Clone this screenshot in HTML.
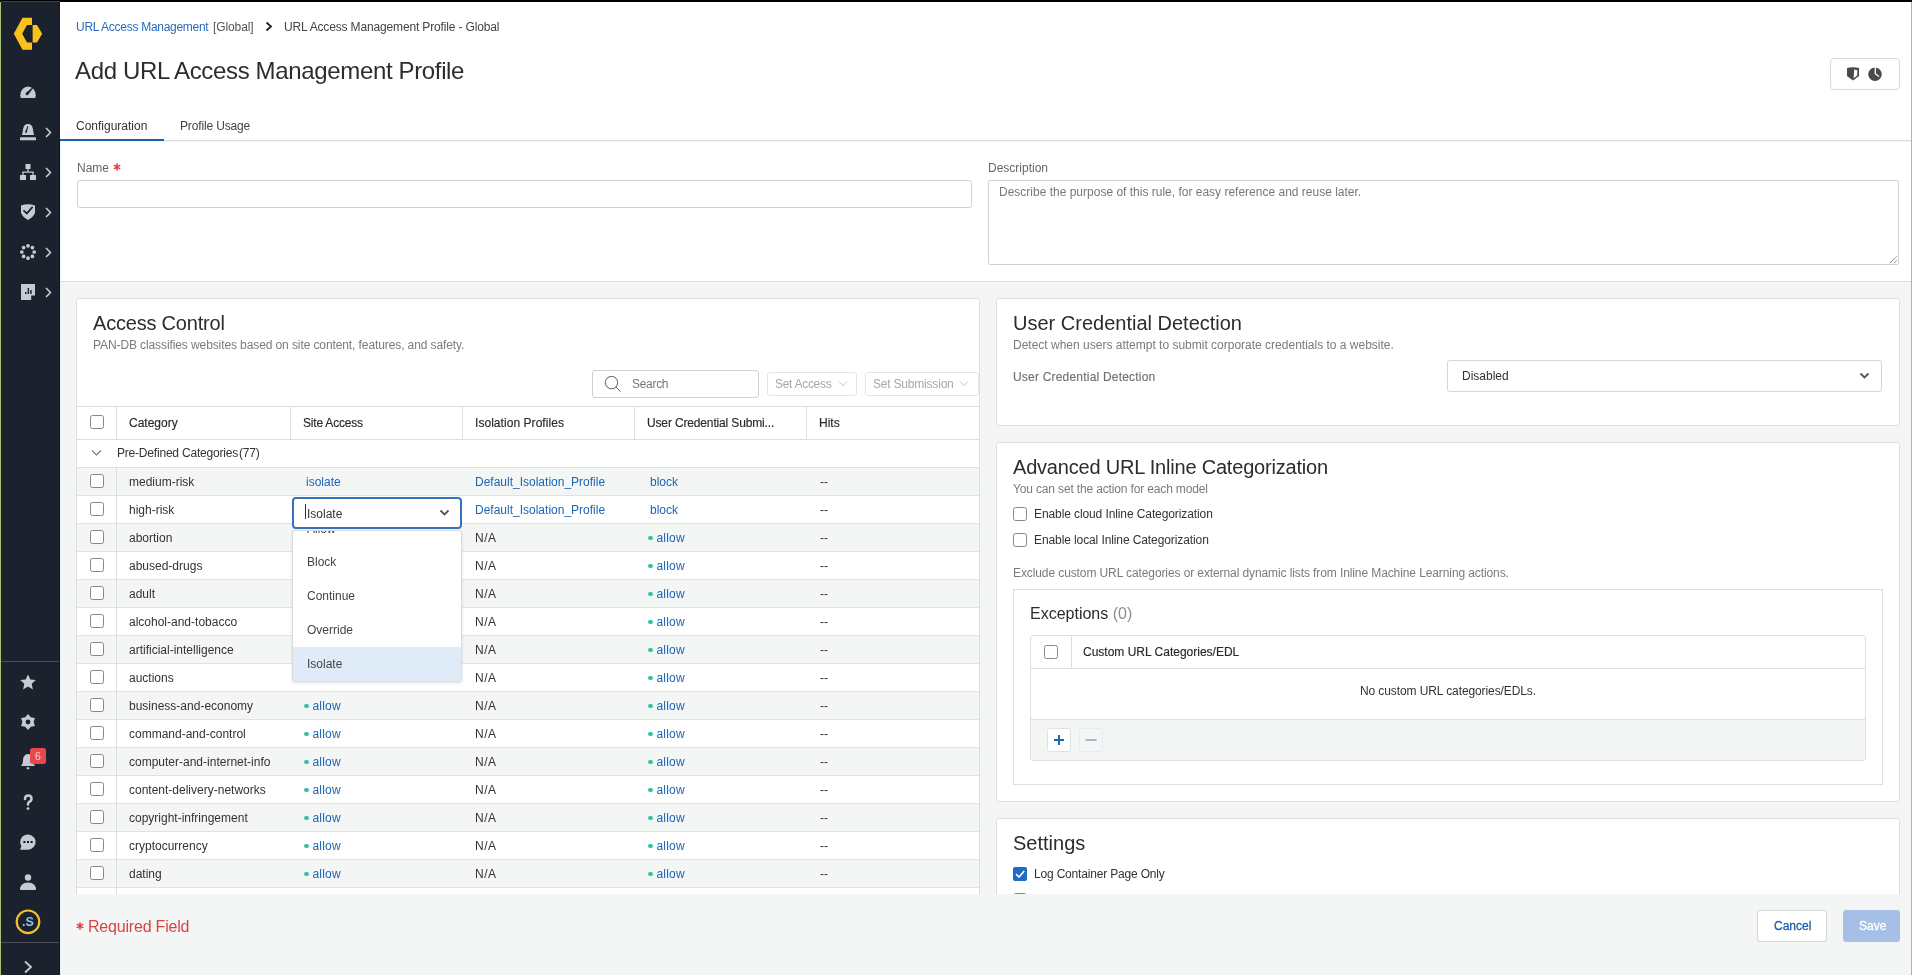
<!DOCTYPE html>
<html><head><meta charset="utf-8"><style>
*{box-sizing:border-box;margin:0;padding:0}
html,body{width:1912px;height:975px;overflow:hidden;background:#fff;font-family:"Liberation Sans",sans-serif;color:#333;font-size:12px}
.a{position:absolute;white-space:nowrap}
.t{position:absolute;white-space:nowrap;line-height:14px}
.graybg{background:#f4f5f5}
.panel{position:absolute;background:#fff;border:1px solid #dcdedf;border-radius:3px}
.cb{position:absolute;width:14px;height:14px;border:1px solid #85898e;border-radius:2.5px;background:#fff}
.lnk{color:#1b65b5}
.hd{color:#262a2e;-webkit-text-stroke:0.15px #262a2e}
.row{position:absolute;left:0;width:903px;height:28px;border-bottom:1px solid #dfe1e3}
.dot{display:inline-block;width:4.5px;height:4.5px;border-radius:50%;background:#3dbdad;margin-right:4px;vertical-align:2px}
.ptitle{font-size:20px;color:#2a2d30;line-height:22px}
.psub{font-size:12px;color:#777b80;line-height:14px}
</style></head><body>
<div id="root" style="position:absolute;left:0;top:0;width:1912px;height:975px;will-change:transform">
<div class="a graybg" style="left:60px;top:282px;width:1852px;height:693px"></div>
<div class="t lnk" style="left:76px;top:20px;letter-spacing:-0.28px;color:#2a6cb8">URL Access Management</div>
<div class="t" style="left:213px;top:20px;color:#555;letter-spacing:-0.1px">[Global]</div>
<svg class="a" style="left:265px;top:21px" width="8" height="11" viewBox="0 0 8 11"><path d="M1.5 1.5 L6 5.5 L1.5 9.5" fill="none" stroke="#222" stroke-width="1.8"/></svg>
<div class="t" style="left:284px;top:20px;color:#444;letter-spacing:-0.15px">URL Access Management Profile - Global</div>
<div class="a" style="left:75px;top:57px;font-size:24px;line-height:28px;color:#2b2e31;letter-spacing:-0.35px">Add URL Access Management Profile</div>
<div class="a" style="left:1830px;top:58px;width:70px;height:32px;border:1px solid #d5d8db;border-radius:4px"></div>
<svg class="a" style="left:1840px;top:62px" width="50" height="24" viewBox="1840 62 50 24"><path d="M1847 68 Q1853 66.3 1859 68 L1859 76 L1853 80.4 L1847 76 Z" fill="#4a4a4a"/><path d="M1854.2 69.6 L1857.4 70.2 L1857.2 75.4 L1853.6 78.3 Z" fill="#fff"/><circle cx="1875" cy="74.2" r="6.7" fill="#4a4a4a"/><path d="M1875.3 66.5 L1875.3 73.8 L1879 76.6" fill="none" stroke="#fff" stroke-width="1.3"/></svg>
<div class="t" style="left:76px;top:119px;color:#333">Configuration</div>
<div class="t" style="left:180px;top:119px;color:#444;letter-spacing:-0.15px">Profile Usage</div>
<div class="a" style="left:60px;top:140px;width:1852px;height:1px;background:#dadbdc"></div><div class="a" style="left:60px;top:141px;width:1852px;height:1px;background:#f3f4f4"></div>
<div class="a" style="left:60px;top:139px;width:104px;height:2px;background:#1f5fa8"></div>
<div class="t" style="left:77px;top:161px;color:#666">Name</div><svg width="8" height="8" viewBox="0 0 8 8" style="position:absolute;left:113px;top:163px"><path d="M4 0.3 V7.7 M0.8 2.2 L7.2 5.8 M0.8 5.8 L7.2 2.2" stroke="#d94545" stroke-width="1.5"/></svg>
<div class="a" style="left:77px;top:180px;width:895px;height:28px;border:1px solid #cfd2d5;border-radius:3px"></div>
<div class="t" style="left:988px;top:161px;color:#666">Description</div>
<div class="a" style="left:988px;top:180px;width:911px;height:85px;border:1px solid #cfd2d5;border-radius:2px"></div>
<div class="t" style="left:999px;top:185px;color:#777">Describe the purpose of this rule, for easy reference and reuse later.</div>
<div class="a" style="left:60px;top:281px;width:1852px;height:1px;background:#dcdedf"></div>
<svg class="a" style="left:1888px;top:254px" width="10" height="10" viewBox="1888 254 10 10"><path d="M1890 263 L1897 256 M1894.3 263 L1897 260.3" stroke="#555" stroke-width="1" stroke-dasharray="1 0.6"/></svg>
<div class="a" style="left:0;top:0;width:1912px;height:894px;overflow:hidden">
<div class="panel" style="left:76px;top:298px;width:904px;height:700px"></div>
<div class="t ptitle" style="left:93px;top:312px;letter-spacing:-0.2px">Access Control</div>
<div class="t psub" style="left:93px;top:338px;letter-spacing:-0.1px">PAN-DB classifies websites based on site content, features, and safety.</div>
<div class="a" style="left:592px;top:370px;width:167px;height:28px;border:1px solid #cfd2d5;border-radius:3px;background:#fff"></div>
<svg class="a" style="left:604px;top:375px" width="18" height="18" viewBox="0 0 18 18"><circle cx="7.5" cy="7.6" r="6.2" fill="none" stroke="#5a5e62" stroke-width="1"/><line x1="11.9" y1="12" x2="16.5" y2="16.6" stroke="#5a5e62" stroke-width="1"/></svg>
<div class="t" style="left:632px;top:377px;color:#72777c;letter-spacing:-0.3px">Search</div>
<div class="a" style="left:767px;top:372px;width:90px;height:24px;border:1px solid #e3e5e7;border-radius:3px;background:#fff"></div>
<div class="t" style="left:775px;top:377px;color:#a4a8ac;letter-spacing:-0.3px">Set Access</div>
<svg class="a" style="left:838px;top:380px" width="10" height="7" viewBox="0 0 10 7"><path d="M1 1.5 L5 5.5 L9 1.5" fill="none" stroke="#c3c6c9" stroke-width="1"/></svg>
<div class="a" style="left:865px;top:372px;width:114px;height:24px;border:1px solid #e3e5e7;border-radius:3px;background:#fff"></div>
<div class="t" style="left:873px;top:377px;color:#a4a8ac;letter-spacing:-0.2px">Set Submission</div>
<svg class="a" style="left:959px;top:380px" width="10" height="7" viewBox="0 0 10 7"><path d="M1 1.5 L5 5.5 L9 1.5" fill="none" stroke="#c3c6c9" stroke-width="1"/></svg>
<div class="a" style="left:77px;top:406px;width:902px;height:1px;background:#dcdee0"></div>
<div class="a" style="left:77px;top:439px;width:902px;height:1px;background:#dcdee0"></div>
<div class="a" style="left:116px;top:407px;width:1px;height:32px;background:#dcdee0"></div>
<div class="a" style="left:290px;top:407px;width:1px;height:32px;background:#dcdee0"></div>
<div class="a" style="left:462px;top:407px;width:1px;height:32px;background:#dcdee0"></div>
<div class="a" style="left:634px;top:407px;width:1px;height:32px;background:#dcdee0"></div>
<div class="a" style="left:806px;top:407px;width:1px;height:32px;background:#dcdee0"></div>
<div class="cb" style="left:90px;top:415px"></div>
<div class="t hd" style="left:129px;top:416px;letter-spacing:0px">Category</div>
<div class="t hd" style="left:303px;top:416px;letter-spacing:-0.2px">Site Access</div>
<div class="t hd" style="left:475px;top:416px;letter-spacing:0.05px">Isolation Profiles</div>
<div class="t hd" style="left:647px;top:416px;letter-spacing:-0.15px">User Credential Submi...</div>
<div class="t hd" style="left:819px;top:416px;letter-spacing:0px">Hits</div>
<div class="a" style="left:77px;top:467px;width:902px;height:1px;background:#dcdee0"></div>
<svg class="a" style="left:91px;top:449px" width="11" height="8" viewBox="0 0 11 8"><path d="M1 1.5 L5.5 6 L10 1.5" fill="none" stroke="#777" stroke-width="1.1"/></svg>
<div class="t" style="left:117px;top:446px;color:#333;letter-spacing:-0.2px">Pre-Defined Categories<span style="margin-left:1px">(77)</span></div>
<div class="a" style="left:77px;top:468px;width:902px;height:28px;background:#f4f5f5;border-bottom:1px solid #e0e2e4"></div>
<div class="a" style="left:116px;top:467px;width:1px;height:28px;background:#dcdee0"></div>
<div class="cb" style="left:90px;top:474px"></div>
<div class="t" style="left:129px;top:475px;color:#333">medium-risk</div>
<div class="t" style="left:306px;top:475px"><span class="lnk">isolate</span></div>
<div class="t" style="left:475px;top:475px;color:#333"><span class="lnk">Default_Isolation_Profile</span></div>
<div class="t" style="left:650px;top:475px"><span class="lnk">block</span></div>
<div class="t" style="left:820px;top:475px;color:#333">--</div>
<div class="a" style="left:77px;top:496px;width:902px;height:28px;background:#fff;border-bottom:1px solid #e0e2e4"></div>
<div class="a" style="left:116px;top:495px;width:1px;height:28px;background:#dcdee0"></div>
<div class="cb" style="left:90px;top:502px"></div>
<div class="t" style="left:129px;top:503px;color:#333">high-risk</div>
<div class="t" style="left:475px;top:503px;color:#333"><span class="lnk">Default_Isolation_Profile</span></div>
<div class="t" style="left:650px;top:503px"><span class="lnk">block</span></div>
<div class="t" style="left:820px;top:503px;color:#333">--</div>
<div class="a" style="left:77px;top:524px;width:902px;height:28px;background:#f4f5f5;border-bottom:1px solid #e0e2e4"></div>
<div class="a" style="left:116px;top:523px;width:1px;height:28px;background:#dcdee0"></div>
<div class="cb" style="left:90px;top:530px"></div>
<div class="t" style="left:129px;top:531px;color:#333">abortion</div>
<div class="t" style="left:475px;top:531px;color:#333"><span style="letter-spacing:0.5px">N/A</span></div>
<div class="t" style="left:648px;top:531px"><span class="dot"></span><span class="lnk" style="letter-spacing:0.2px">allow</span></div>
<div class="t" style="left:820px;top:531px;color:#333">--</div>
<div class="a" style="left:77px;top:552px;width:902px;height:28px;background:#fff;border-bottom:1px solid #e0e2e4"></div>
<div class="a" style="left:116px;top:551px;width:1px;height:28px;background:#dcdee0"></div>
<div class="cb" style="left:90px;top:558px"></div>
<div class="t" style="left:129px;top:559px;color:#333">abused-drugs</div>
<div class="t" style="left:475px;top:559px;color:#333"><span style="letter-spacing:0.5px">N/A</span></div>
<div class="t" style="left:648px;top:559px"><span class="dot"></span><span class="lnk" style="letter-spacing:0.2px">allow</span></div>
<div class="t" style="left:820px;top:559px;color:#333">--</div>
<div class="a" style="left:77px;top:580px;width:902px;height:28px;background:#f4f5f5;border-bottom:1px solid #e0e2e4"></div>
<div class="a" style="left:116px;top:579px;width:1px;height:28px;background:#dcdee0"></div>
<div class="cb" style="left:90px;top:586px"></div>
<div class="t" style="left:129px;top:587px;color:#333">adult</div>
<div class="t" style="left:475px;top:587px;color:#333"><span style="letter-spacing:0.5px">N/A</span></div>
<div class="t" style="left:648px;top:587px"><span class="dot"></span><span class="lnk" style="letter-spacing:0.2px">allow</span></div>
<div class="t" style="left:820px;top:587px;color:#333">--</div>
<div class="a" style="left:77px;top:608px;width:902px;height:28px;background:#fff;border-bottom:1px solid #e0e2e4"></div>
<div class="a" style="left:116px;top:607px;width:1px;height:28px;background:#dcdee0"></div>
<div class="cb" style="left:90px;top:614px"></div>
<div class="t" style="left:129px;top:615px;color:#333">alcohol-and-tobacco</div>
<div class="t" style="left:475px;top:615px;color:#333"><span style="letter-spacing:0.5px">N/A</span></div>
<div class="t" style="left:648px;top:615px"><span class="dot"></span><span class="lnk" style="letter-spacing:0.2px">allow</span></div>
<div class="t" style="left:820px;top:615px;color:#333">--</div>
<div class="a" style="left:77px;top:636px;width:902px;height:28px;background:#f4f5f5;border-bottom:1px solid #e0e2e4"></div>
<div class="a" style="left:116px;top:635px;width:1px;height:28px;background:#dcdee0"></div>
<div class="cb" style="left:90px;top:642px"></div>
<div class="t" style="left:129px;top:643px;color:#333">artificial-intelligence</div>
<div class="t" style="left:475px;top:643px;color:#333"><span style="letter-spacing:0.5px">N/A</span></div>
<div class="t" style="left:648px;top:643px"><span class="dot"></span><span class="lnk" style="letter-spacing:0.2px">allow</span></div>
<div class="t" style="left:820px;top:643px;color:#333">--</div>
<div class="a" style="left:77px;top:664px;width:902px;height:28px;background:#fff;border-bottom:1px solid #e0e2e4"></div>
<div class="a" style="left:116px;top:663px;width:1px;height:28px;background:#dcdee0"></div>
<div class="cb" style="left:90px;top:670px"></div>
<div class="t" style="left:129px;top:671px;color:#333">auctions</div>
<div class="t" style="left:475px;top:671px;color:#333"><span style="letter-spacing:0.5px">N/A</span></div>
<div class="t" style="left:648px;top:671px"><span class="dot"></span><span class="lnk" style="letter-spacing:0.2px">allow</span></div>
<div class="t" style="left:820px;top:671px;color:#333">--</div>
<div class="a" style="left:77px;top:692px;width:902px;height:28px;background:#f4f5f5;border-bottom:1px solid #e0e2e4"></div>
<div class="a" style="left:116px;top:691px;width:1px;height:28px;background:#dcdee0"></div>
<div class="cb" style="left:90px;top:698px"></div>
<div class="t" style="left:129px;top:699px;color:#333">business-and-economy</div>
<div class="t" style="left:304px;top:699px"><span class="dot"></span><span class="lnk" style="letter-spacing:0.2px">allow</span></div>
<div class="t" style="left:475px;top:699px;color:#333"><span style="letter-spacing:0.5px">N/A</span></div>
<div class="t" style="left:648px;top:699px"><span class="dot"></span><span class="lnk" style="letter-spacing:0.2px">allow</span></div>
<div class="t" style="left:820px;top:699px;color:#333">--</div>
<div class="a" style="left:77px;top:720px;width:902px;height:28px;background:#fff;border-bottom:1px solid #e0e2e4"></div>
<div class="a" style="left:116px;top:719px;width:1px;height:28px;background:#dcdee0"></div>
<div class="cb" style="left:90px;top:726px"></div>
<div class="t" style="left:129px;top:727px;color:#333">command-and-control</div>
<div class="t" style="left:304px;top:727px"><span class="dot"></span><span class="lnk" style="letter-spacing:0.2px">allow</span></div>
<div class="t" style="left:475px;top:727px;color:#333"><span style="letter-spacing:0.5px">N/A</span></div>
<div class="t" style="left:648px;top:727px"><span class="dot"></span><span class="lnk" style="letter-spacing:0.2px">allow</span></div>
<div class="t" style="left:820px;top:727px;color:#333">--</div>
<div class="a" style="left:77px;top:748px;width:902px;height:28px;background:#f4f5f5;border-bottom:1px solid #e0e2e4"></div>
<div class="a" style="left:116px;top:747px;width:1px;height:28px;background:#dcdee0"></div>
<div class="cb" style="left:90px;top:754px"></div>
<div class="t" style="left:129px;top:755px;color:#333">computer-and-internet-info</div>
<div class="t" style="left:304px;top:755px"><span class="dot"></span><span class="lnk" style="letter-spacing:0.2px">allow</span></div>
<div class="t" style="left:475px;top:755px;color:#333"><span style="letter-spacing:0.5px">N/A</span></div>
<div class="t" style="left:648px;top:755px"><span class="dot"></span><span class="lnk" style="letter-spacing:0.2px">allow</span></div>
<div class="t" style="left:820px;top:755px;color:#333">--</div>
<div class="a" style="left:77px;top:776px;width:902px;height:28px;background:#fff;border-bottom:1px solid #e0e2e4"></div>
<div class="a" style="left:116px;top:775px;width:1px;height:28px;background:#dcdee0"></div>
<div class="cb" style="left:90px;top:782px"></div>
<div class="t" style="left:129px;top:783px;color:#333">content-delivery-networks</div>
<div class="t" style="left:304px;top:783px"><span class="dot"></span><span class="lnk" style="letter-spacing:0.2px">allow</span></div>
<div class="t" style="left:475px;top:783px;color:#333"><span style="letter-spacing:0.5px">N/A</span></div>
<div class="t" style="left:648px;top:783px"><span class="dot"></span><span class="lnk" style="letter-spacing:0.2px">allow</span></div>
<div class="t" style="left:820px;top:783px;color:#333">--</div>
<div class="a" style="left:77px;top:804px;width:902px;height:28px;background:#f4f5f5;border-bottom:1px solid #e0e2e4"></div>
<div class="a" style="left:116px;top:803px;width:1px;height:28px;background:#dcdee0"></div>
<div class="cb" style="left:90px;top:810px"></div>
<div class="t" style="left:129px;top:811px;color:#333">copyright-infringement</div>
<div class="t" style="left:304px;top:811px"><span class="dot"></span><span class="lnk" style="letter-spacing:0.2px">allow</span></div>
<div class="t" style="left:475px;top:811px;color:#333"><span style="letter-spacing:0.5px">N/A</span></div>
<div class="t" style="left:648px;top:811px"><span class="dot"></span><span class="lnk" style="letter-spacing:0.2px">allow</span></div>
<div class="t" style="left:820px;top:811px;color:#333">--</div>
<div class="a" style="left:77px;top:832px;width:902px;height:28px;background:#fff;border-bottom:1px solid #e0e2e4"></div>
<div class="a" style="left:116px;top:831px;width:1px;height:28px;background:#dcdee0"></div>
<div class="cb" style="left:90px;top:838px"></div>
<div class="t" style="left:129px;top:839px;color:#333">cryptocurrency</div>
<div class="t" style="left:304px;top:839px"><span class="dot"></span><span class="lnk" style="letter-spacing:0.2px">allow</span></div>
<div class="t" style="left:475px;top:839px;color:#333"><span style="letter-spacing:0.5px">N/A</span></div>
<div class="t" style="left:648px;top:839px"><span class="dot"></span><span class="lnk" style="letter-spacing:0.2px">allow</span></div>
<div class="t" style="left:820px;top:839px;color:#333">--</div>
<div class="a" style="left:77px;top:860px;width:902px;height:28px;background:#f4f5f5;border-bottom:1px solid #e0e2e4"></div>
<div class="a" style="left:116px;top:859px;width:1px;height:28px;background:#dcdee0"></div>
<div class="cb" style="left:90px;top:866px"></div>
<div class="t" style="left:129px;top:867px;color:#333">dating</div>
<div class="t" style="left:304px;top:867px"><span class="dot"></span><span class="lnk" style="letter-spacing:0.2px">allow</span></div>
<div class="t" style="left:475px;top:867px;color:#333"><span style="letter-spacing:0.5px">N/A</span></div>
<div class="t" style="left:648px;top:867px"><span class="dot"></span><span class="lnk" style="letter-spacing:0.2px">allow</span></div>
<div class="t" style="left:820px;top:867px;color:#333">--</div>
<div class="a" style="left:77px;top:888px;width:902px;height:28px;background:#fff;border-bottom:1px solid #e0e2e4"></div>
<div class="a" style="left:116px;top:887px;width:1px;height:28px;background:#dcdee0"></div>
<div class="cb" style="left:90px;top:894px"></div>
<div class="t" style="left:129px;top:895px;color:#333">data-theft</div>
<div class="t" style="left:304px;top:895px"><span class="dot"></span><span class="lnk" style="letter-spacing:0.2px">allow</span></div>
<div class="t" style="left:475px;top:895px;color:#333"><span style="letter-spacing:0.5px">N/A</span></div>
<div class="t" style="left:648px;top:895px"><span class="dot"></span><span class="lnk" style="letter-spacing:0.2px">allow</span></div>
<div class="t" style="left:820px;top:895px;color:#333">--</div>
<div class="a" style="left:292px;top:497px;width:170px;height:32px;border:2px solid #3574bc;border-radius:4px;background:#fff"></div>
<div class="a" style="left:305px;top:504px;width:1px;height:15px;background:#333"></div>
<div class="t" style="left:307px;top:507px;color:#333">Isolate</div>
<svg class="a" style="left:439px;top:509px" width="11" height="8" viewBox="0 0 11 8"><path d="M1.5 1.5 L5.5 5.5 L9.5 1.5" fill="none" stroke="#555" stroke-width="1.8"/></svg>
<div class="a" style="left:292px;top:530px;width:170px;height:152px;border:1px solid #dadcde;border-radius:3px;background:#fff;box-shadow:0 1px 3px rgba(0,0,0,0.12);overflow:hidden">
<div class="a" style="left:0;top:-20px;width:168px;height:34px;"></div>
<div class="t" style="left:14px;top:-9px;color:#444">Allow</div>
<div class="a" style="left:0;top:14px;width:168px;height:34px;"></div>
<div class="t" style="left:14px;top:24px;color:#444">Block</div>
<div class="a" style="left:0;top:48px;width:168px;height:34px;"></div>
<div class="t" style="left:14px;top:58px;color:#444">Continue</div>
<div class="a" style="left:0;top:82px;width:168px;height:34px;"></div>
<div class="t" style="left:14px;top:92px;color:#444">Override</div>
<div class="a" style="left:0;top:116px;width:168px;height:34px;background:#dfebf7;"></div>
<div class="t" style="left:14px;top:126px;color:#444">Isolate</div>
</div>
<div class="panel" style="left:996px;top:298px;width:904px;height:128px"></div>
<div class="t ptitle" style="left:1013px;top:312px">User Credential Detection</div>
<div class="t psub" style="left:1013px;top:338px">Detect when users attempt to submit corporate credentials to a website.</div>
<div class="t" style="left:1013px;top:370px;color:#6d7176;letter-spacing:0.2px;-webkit-text-stroke:0.15px #6d7176">User Credential Detection</div>
<div class="a" style="left:1447px;top:360px;width:435px;height:32px;border:1px solid #d3d6d9;border-radius:3px;background:#fff"></div>
<div class="t" style="left:1462px;top:369px;color:#333">Disabled</div>
<svg class="a" style="left:1859px;top:372px" width="11" height="8" viewBox="0 0 11 8"><path d="M1.5 1.5 L5.5 5.5 L9.5 1.5" fill="none" stroke="#555" stroke-width="1.8"/></svg>
<div class="panel" style="left:996px;top:442px;width:904px;height:360px"></div>
<div class="t ptitle" style="left:1013px;top:456px;letter-spacing:-0.2px">Advanced URL Inline Categorization</div>
<div class="t psub" style="left:1013px;top:482px;letter-spacing:-0.15px">You can set the action for each model</div>
<div class="cb" style="left:1013px;top:507px"></div>
<div class="t" style="left:1034px;top:507px;color:#333;letter-spacing:-0.1px">Enable cloud Inline Categorization</div>
<div class="cb" style="left:1013px;top:533px"></div>
<div class="t" style="left:1034px;top:533px;color:#333;letter-spacing:-0.1px">Enable local Inline Categorization</div>
<div class="t psub" style="left:1013px;top:566px;letter-spacing:-0.1px">Exclude custom URL categories or external dynamic lists from Inline Machine Learning actions.</div>
<div class="a" style="left:1013px;top:589px;width:870px;height:196px;border:1px solid #dcdedf;background:#fff"></div>
<div class="t" style="left:1030px;top:605px;font-size:16px;line-height:18px;color:#2a2d30">Exceptions <span style="color:#8a8e92">(0)</span></div>
<div class="a" style="left:1030px;top:635px;width:836px;height:126px;border:1px solid #dcdee0;border-radius:3px;background:#fff;overflow:hidden">
<div class="a" style="left:0;top:32px;width:836px;height:1px;background:#dcdee0"></div>
<div class="a" style="left:40px;top:0;width:1px;height:32px;background:#dcdee0"></div>
<div class="cb" style="left:13px;top:9px"></div>
<div class="t hd" style="left:52px;top:9px">Custom URL Categories/EDL</div>
<div class="t" style="left:329px;top:48px;color:#333;letter-spacing:-0.1px">No custom URL categories/EDLs.</div>
<div class="a graybg" style="left:0;top:83px;width:836px;height:43px;border-top:1px solid #dcdee0"></div>
</div>
<div class="a" style="left:1047px;top:728px;width:24px;height:24px;border:1px solid #dfe1e3;border-radius:3px;background:#fff"></div>
<svg class="a" style="left:1052px;top:733px" width="14" height="14" viewBox="0 0 14 14"><path d="M7 2 V12 M2 7 H12" stroke="#1f66b8" stroke-width="2"/></svg>
<div class="a" style="left:1079px;top:728px;width:24px;height:24px;border:1px solid #e8eaec;border-radius:3px;background:#f4f5f5"></div>
<svg class="a" style="left:1084px;top:733px" width="14" height="14" viewBox="0 0 14 14"><path d="M1.5 7 H12.5" stroke="#a8b6cc" stroke-width="2"/></svg>
<div class="panel" style="left:996px;top:818px;width:904px;height:200px"></div>
<div class="t ptitle" style="left:1013px;top:832px">Settings</div>
<div class="a" style="left:1013px;top:867px;width:14px;height:14px;border-radius:2px;background:#1f6bc6"></div>
<svg class="a" style="left:1013px;top:867px" width="14" height="14" viewBox="0 0 14 14"><path d="M3 7.2 L6 10 L11.2 4" fill="none" stroke="#fff" stroke-width="1.6"/></svg>
<div class="t" style="left:1034px;top:867px;color:#333;letter-spacing:-0.18px">Log Container Page Only</div>
<div class="cb" style="left:1013px;top:893px"></div>
</div>
<div class="a graybg" style="left:60px;top:894px;width:1852px;height:81px"></div>
<svg width="8" height="8" viewBox="0 0 8 8" style="position:absolute;left:76px;top:922px"><path d="M4 0.3 V7.7 M0.8 2.2 L7.2 5.8 M0.8 5.8 L7.2 2.2" stroke="#d94545" stroke-width="1.5"/></svg><div class="t" style="left:88px;top:918px;font-size:16px;line-height:18px;color:#d64545;letter-spacing:-0.2px">Required Field</div>
<div class="a" style="left:1757px;top:910px;width:70px;height:32px;border:1px solid #d3d6d9;border-radius:3px;background:#fff"></div>
<div class="t" style="left:1774px;top:919px;color:#1f5fa8;-webkit-text-stroke:0.3px #1f5fa8">Cancel</div>
<div class="a" style="left:1843px;top:910px;width:57px;height:32px;border-radius:3px;background:#a6bfe6"></div>
<div class="t" style="left:1859px;top:919px;color:#fff;-webkit-text-stroke:0.3px #fff">Save</div>
<div class="a" style="left:60px;top:141px;width:1px;height:834px;background:#eceff5"></div>
<div class="a" style="left:0;top:0;width:60px;height:975px;background:#1c222d"></div>
<div class="a" style="left:59px;top:0;width:1px;height:975px;background:#14171e"></div>
<div class="a" style="left:1px;top:661px;width:58px;height:1px;background:#4a4e57"></div>
<div class="a" style="left:1px;top:942px;width:58px;height:1px;background:#4a4e57"></div>
<svg class="a" style="left:0;top:0" width="60" height="975" viewBox="0 0 60 975">
<g fill="#f8c21c">
<path d="M32 17.8 L22.5 17.8 L13.8 33.8 L22.5 49.8 L32 49.8 L32 42.6 L27 42.6 L22.2 33.8 L27 24.9 L32 24.9 Z"/>
<path d="M32.6 24.9 L37 24.9 L42.2 33.8 L37 42.6 L32.6 42.6 Z"/>
</g>
<g fill="#c6cad2">
<path d="M21 98 Q20.4 97.6 20.3 95.2 A7.7 8.8 0 0 1 35.7 95.2 Q35.6 97.6 35 98 Z"/>
<path d="M22 135 L23.2 128.4 Q24.2 124 28 124 Q31.8 124 32.8 128.4 L34 135 Z"/>
<rect x="20" y="137.3" width="16" height="3" rx="0.6"/>
<rect x="25.5" y="164" width="5" height="5"/>
<rect x="27.4" y="168" width="1.2" height="4"/>
<rect x="22.5" y="171.5" width="11" height="1.2"/>
<rect x="22.4" y="172" width="1.2" height="3"/>
<rect x="32.4" y="172" width="1.2" height="3"/>
<rect x="20" y="175" width="6" height="5"/>
<rect x="30" y="175" width="6" height="5"/>
<path d="M21 205.5 Q28 202.8 35 205.5 L35 212.5 Q34 216.5 28 220 Q22 216.5 21 212.5 Z"/>
<circle cx="28" cy="245.8" r="1.85"/><circle cx="28" cy="258.2" r="1.85"/>
<circle cx="21.8" cy="252" r="1.85"/><circle cx="34.2" cy="252" r="1.85"/>
<circle cx="23.6" cy="247.6" r="1.85"/><circle cx="32.4" cy="247.6" r="1.85"/>
<circle cx="23.6" cy="256.4" r="1.85"/><circle cx="32.4" cy="256.4" r="1.85"/>
<path d="M21 284 L35 284 L35 295.6 L31.2 295.6 L31.2 300 L21 300 Z"/>
<path d="M28 674.5 L30.3 679.6 L35.8 680.1 L31.7 683.7 L32.9 689.5 L28 686.6 L23.1 689.5 L24.3 683.7 L20.2 680.1 L25.7 679.6 Z"/>
<path fill-rule="evenodd" d="M28.00 714.00 L30.80 717.15 L34.93 718.00 L33.60 722.00 L34.93 726.00 L30.80 726.85 L28.00 730.00 L25.20 726.85 L21.07 726.00 L22.40 722.00 L21.07 718.00 L25.20 717.15 Z M28 719.6 A2.4 2.4 0 1 0 28 724.4 A2.4 2.4 0 1 0 28 719.6 Z"/>
<path d="M21 766 Q23 764 23 760.5 Q23 754.5 28 754 Q33 754.5 33 760.5 Q33 764 35 766 Z"/>
<rect x="26.5" y="767.2" width="3" height="2" rx="1"/>
<path d="M20 849.8 L21.4 846.2 A7.7 7.6 0 1 1 28 849.7 Z"/>
<circle cx="28" cy="877.5" r="3.2"/>
<path d="M20 890 Q20 882.5 28 882.5 Q36 882.5 36 890 Z"/>
</g>
<g fill="none" stroke="#c6cad2" stroke-width="1.7" stroke-linecap="round" stroke-linejoin="round">
<path d="M46.5 128.5 L50.5 132.5 L46.5 136.5"/>
<path d="M46.5 168.5 L50.5 172.5 L46.5 176.5"/>
<path d="M46.5 208.5 L50.5 212.5 L46.5 216.5"/>
<path d="M46.5 248.5 L50.5 252.5 L46.5 256.5"/>
<path d="M46.5 288.5 L50.5 292.5 L46.5 296.5"/>
</g>
<g fill="none" stroke="#c6cad2" stroke-width="2.5" stroke-linecap="round" stroke-linejoin="round">
<path d="M25 799 Q25 795.5 28.2 795.5 Q31.5 795.5 31.5 798.8 Q31.5 801 28.8 802.2 Q28 802.7 28 804.5"/>
</g>
<circle cx="28" cy="808.6" r="1.4" fill="#c6cad2"/>
<path d="M25 961.5 L31 967 L25 972.5" fill="none" stroke="#c6cad2" stroke-width="1.8"/>
<g stroke="#1e222d" stroke-width="1.6" stroke-linecap="round" fill="none">


<path d="M24 210.8 L26.8 213.4 L32.2 207.4" stroke-width="1.8"/>
</g>
<g fill="#1e222d">
<path d="M25.8 93.1 L32.1 87.7 L32.9 88.5 L27.9 95 A1.45 1.45 0 0 1 25.8 93.1 Z"/>
<path d="M25.1 131.9 L27.6 125.9 L28.3 126.2 L26.8 132.6 A0.95 0.95 0 0 1 25.1 131.9 Z"/>
<rect x="25" y="292" width="1.5" height="2"/><rect x="27.6" y="288" width="1.5" height="6"/><rect x="30.2" y="290" width="1.5" height="4"/>
<rect x="23.4" y="841" width="2" height="2" fill="#0e1117"/><rect x="27" y="841" width="2" height="2" fill="#0e1117"/><rect x="30.6" y="841" width="2" height="2" fill="#0e1117"/>
</g>
<rect x="30" y="748" width="16" height="16" rx="2.5" fill="#e5484d"/>
<text x="38" y="759.8" text-anchor="middle" font-family="Liberation Sans" font-size="10.5" fill="#ffd0cc">6</text>
<circle cx="28" cy="921.8" r="11.3" fill="none" stroke="#f2c12e" stroke-width="2.2"/>
<text x="28" y="926.3" text-anchor="middle" font-family="Liberation Sans" font-size="12.5" font-weight="bold" fill="#8ec3f2">.S</text>
</svg>
<div class="a" style="left:0;top:0;width:1px;height:975px;background:#a9c272"></div>
<div class="a" style="left:1911px;top:0;width:1px;height:975px;background:#a9c272"></div>
<div class="a" style="left:0;top:0;width:1912px;height:2px;background:#000"></div>
<div class="a" style="left:1px;top:1px;width:59px;height:1px;background:#3d4046"></div>
</div>
</body></html>
